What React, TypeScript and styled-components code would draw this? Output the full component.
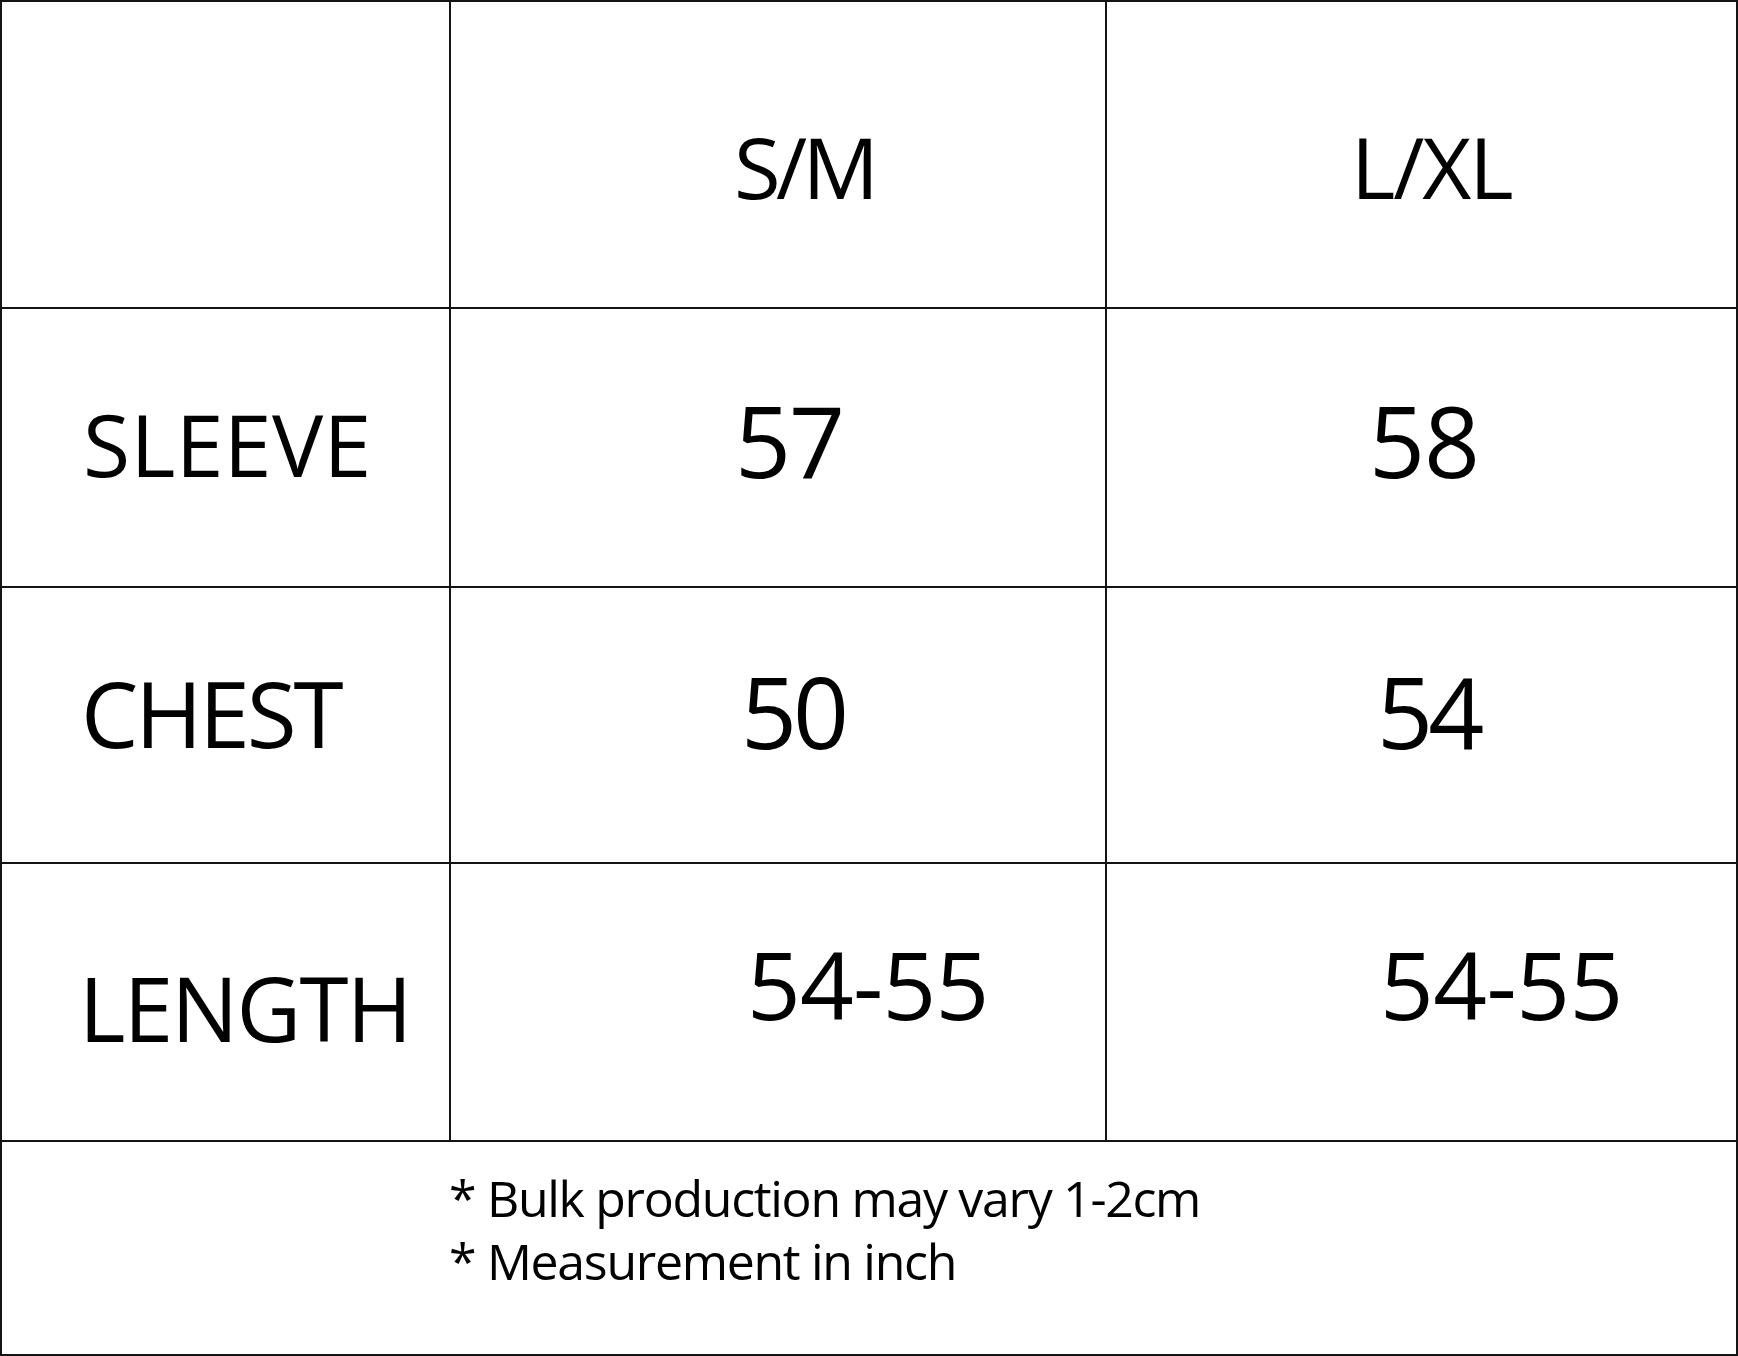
import React from "react";
import styled, { createGlobalStyle } from "styled-components";

const Global = createGlobalStyle`
  html, body { margin: 0; padding: 0; background: #ffffff; }
  body { font-family: "Open Sans", "Noto Sans", sans-serif; color: #000; }
`;

const Sheet = styled.div`
  width: 1738px;
  height: 1356px;
  box-sizing: border-box;
  padding: 2px;
  background: #141414;
  display: grid;
  grid-template-columns: 447px 654px 629px;
  grid-template-rows: 305px 277px 274px 276px 212px;
  gap: 2px;
`;

const Cell = styled.div<{ $pl: number; $pt: number }>`
  background: #ffffff;
  box-sizing: border-box;
  padding-left: ${(p) => p.$pl}px;
  padding-top: ${(p) => p.$pt}px;
  overflow: hidden;
`;

const Label = styled.div<{ $size: number; $ls: number }>`
  font-size: ${(p) => p.$size}px;
  line-height: 1;
  font-weight: 400;
  white-space: nowrap;
  letter-spacing: ${(p) => p.$ls}em;
`;

const Footer = styled.div`
  grid-column: 1 / span 3;
  background: #ffffff;
  box-sizing: border-box;
  padding: 25px 0 0 447px;
`;

const Note = styled.div`
  font-size: 50px;
  line-height: 63px;
  white-space: nowrap;
  letter-spacing: -0.026em;
`;

type C = { text: string; size: number; pl: number; pt: number; ls: number };

const rows: C[][] = [
  [
    { text: "", size: 85, pl: 0, pt: 0, ls: 0 },
    { text: "S/M", size: 85, pl: 283, pt: 122, ls: -0.055 },
    { text: "L/XL", size: 85, pl: 244, pt: 122, ls: -0.025 },
  ],
  [
    { text: "SLEEVE", size: 86, pl: 81, pt: 92, ls: 0.004 },
    { text: "57", size: 98, pl: 284, pt: 82, ls: -0.02 },
    { text: "58", size: 98, pl: 262, pt: 82, ls: -0.01 },
  ],
  [
    { text: "CHEST", size: 91, pl: 79, pt: 80, ls: -0.034 },
    { text: "50", size: 98, pl: 290, pt: 74, ls: -0.04 },
    { text: "54", size: 98, pl: 270, pt: 74, ls: -0.05 },
  ],
  [
    { text: "LENGTH", size: 89, pl: 77, pt: 99, ls: -0.02 },
    { text: "54-55", size: 94, pl: 296, pt: 73, ls: -0.008 },
    { text: "54-55", size: 94, pl: 273, pt: 73, ls: -0.005 },
  ],
];

export default function App() {
  return (
    <>
      <Global />
      <Sheet>
        {rows.map((r, i) =>
          r.map((c, j) => (
            <Cell key={`${i}-${j}`} $pl={c.pl} $pt={c.pt}>
              {c.text && (
                <Label $size={c.size} $ls={c.ls}>
                  {c.text}
                </Label>
              )}
            </Cell>
          ))
        )}
        <Footer>
          <Note>* Bulk production may vary 1-2cm</Note>
          <Note>* Measurement in inch</Note>
        </Footer>
      </Sheet>
    </>
  );
}
